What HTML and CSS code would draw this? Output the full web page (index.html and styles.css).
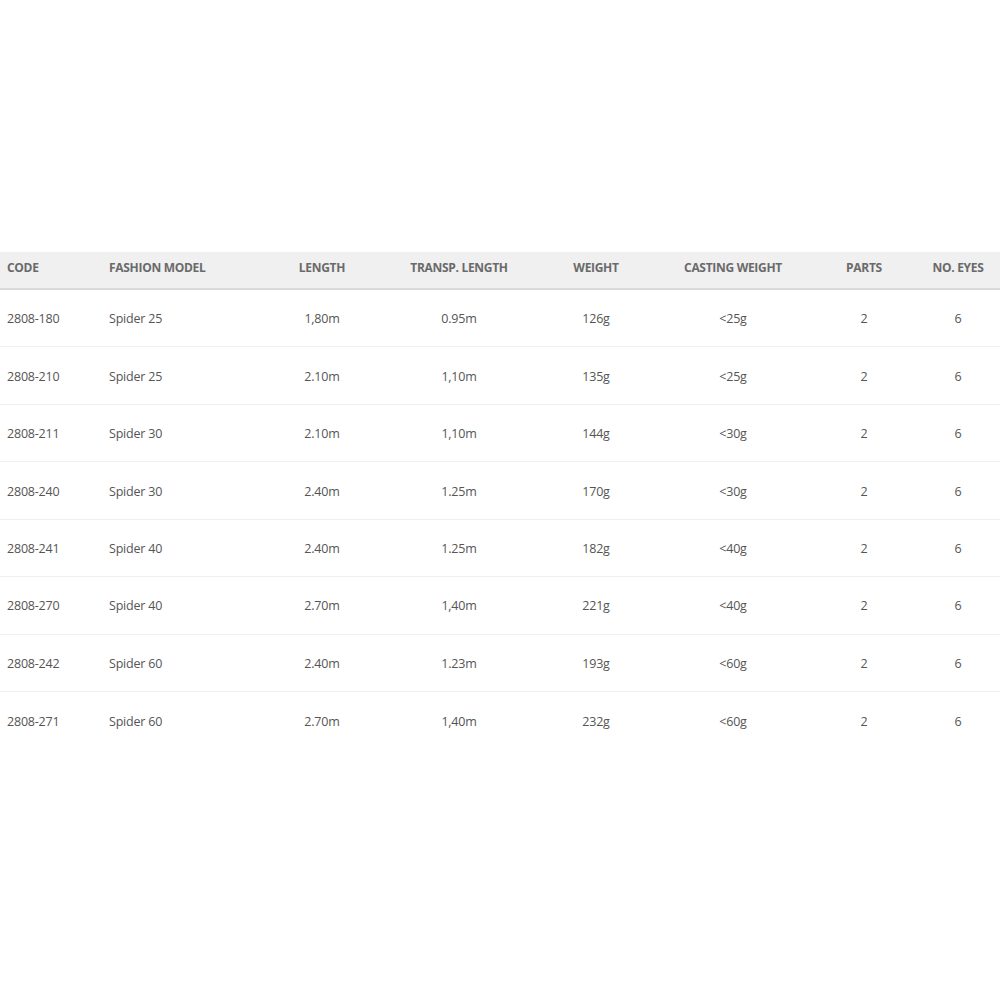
FILE: index.html
```html
<!DOCTYPE html>
<html>
<head>
<meta charset="utf-8">
<link rel="stylesheet" href="styles.css">
</head>
<body>
<div class="spec">
  <div class="row head">
    <div class="c l">CODE</div><div class="c l">FASHION MODEL</div><div class="c">LENGTH</div><div class="c">TRANSP. LENGTH</div><div class="c">WEIGHT</div><div class="c">CASTING WEIGHT</div><div class="c">PARTS</div><div class="c">NO. EYES</div>
  </div>
  <div class="row"><div class="c l">2808-180</div><div class="c l">Spider 25</div><div class="c">1,80m</div><div class="c">0.95m</div><div class="c">126g</div><div class="c">&lt;25g</div><div class="c">2</div><div class="c">6</div></div>
  <div class="row"><div class="c l">2808-210</div><div class="c l">Spider 25</div><div class="c">2.10m</div><div class="c">1,10m</div><div class="c">135g</div><div class="c">&lt;25g</div><div class="c">2</div><div class="c">6</div></div>
  <div class="row"><div class="c l">2808-211</div><div class="c l">Spider 30</div><div class="c">2.10m</div><div class="c">1,10m</div><div class="c">144g</div><div class="c">&lt;30g</div><div class="c">2</div><div class="c">6</div></div>
  <div class="row"><div class="c l">2808-240</div><div class="c l">Spider 30</div><div class="c">2.40m</div><div class="c">1.25m</div><div class="c">170g</div><div class="c">&lt;30g</div><div class="c">2</div><div class="c">6</div></div>
  <div class="row"><div class="c l">2808-241</div><div class="c l">Spider 40</div><div class="c">2.40m</div><div class="c">1.25m</div><div class="c">182g</div><div class="c">&lt;40g</div><div class="c">2</div><div class="c">6</div></div>
  <div class="row"><div class="c l">2808-270</div><div class="c l">Spider 40</div><div class="c">2.70m</div><div class="c">1,40m</div><div class="c">221g</div><div class="c">&lt;40g</div><div class="c">2</div><div class="c">6</div></div>
  <div class="row"><div class="c l">2808-242</div><div class="c l">Spider 60</div><div class="c">2.40m</div><div class="c">1.23m</div><div class="c">193g</div><div class="c">&lt;60g</div><div class="c">2</div><div class="c">6</div></div>
  <div class="row last"><div class="c l">2808-271</div><div class="c l">Spider 60</div><div class="c">2.70m</div><div class="c">1,40m</div><div class="c">232g</div><div class="c">&lt;60g</div><div class="c">2</div><div class="c">6</div></div>
</div>
</body>
</html>
```
FILE: styles.css
```css
html, body { margin: 0; padding: 0; background: #fff; }
body { width: 1000px; height: 1000px; overflow: hidden; font-family: "Open Sans", "Liberation Sans", sans-serif; }
.spec { padding-top: 252px; }
.row {
  display: grid;
  grid-template-columns: 102px 151.5px 137px 137px 137px 137px 125px 63px;
  height: 57.45px;
  align-items: center;
  border-bottom: 1px solid #efefef;
  box-sizing: border-box;
  padding-top: 1px;
  font-size: 12.5px;
  color: #555;
  letter-spacing: -0.2px;
}
.row.last { border-bottom: none; }
.row.head {
  height: 38px;
  padding-top: 0;
  padding-bottom: 6px;
  background: #f0f0f0;
  border-bottom: 2px solid #d9d9d9;
  font-weight: 700;
  color: #6a6a6a;
  font-size: 12px;
  letter-spacing: -0.3px;
}
.c { text-align: center; white-space: nowrap; }
.c.l { text-align: left; padding-left: 7px; }
```
